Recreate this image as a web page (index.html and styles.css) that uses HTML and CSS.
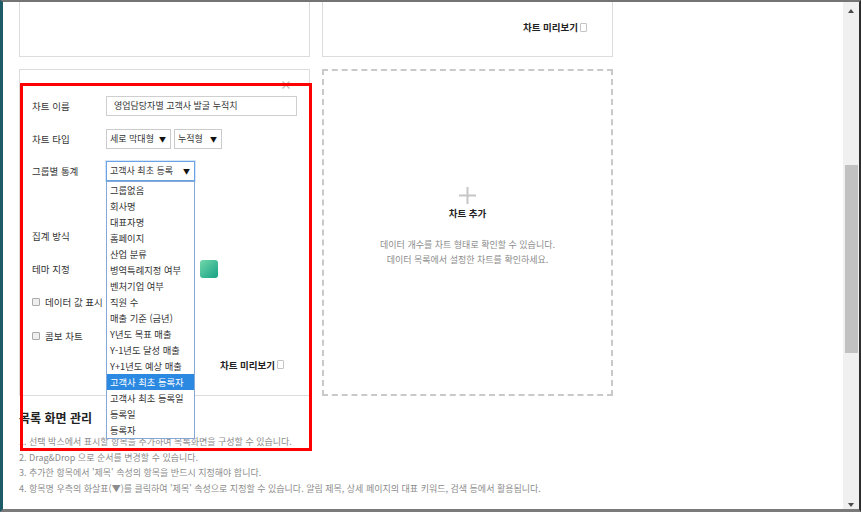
FILE: index.html
```html
<!DOCTYPE html>
<html lang="ko">
<head>
<meta charset="utf-8">
<title>차트 설정</title>
<link rel="stylesheet" href="styles.css">
</head>
<body>
<div class="window">
  <div class="viewport">
    <div class="page">
      <div class="row row-top">
        <div class="card card-top"></div>
        <div class="card card-top card-preview">
          <span class="preview">차트 미리보기<i class="tofu"></i></span>
        </div>
      </div>

      <div class="row row-main">
        <div class="card card-form">
          <span class="close"><svg width="8" height="8" viewBox="0 0 8 8"><path d="M0.5 0.5L7.5 7.5M7.5 0.5L0.5 7.5" stroke="#bdbdbd" stroke-width="1.4" fill="none"/></svg></span>
          <div class="form">
            <div class="frow"><span class="label">차트 이름</span><div class="input">영업담당자별 고객사 발굴 누적치</div></div>
            <div class="frow"><span class="label">차트 타입</span><div class="select w65">세로 막대형<span class="arr">▼</span></div><div class="select w48">누적형<span class="arr">▼</span></div></div>
            <div class="frow"><span class="label">그룹별 통계</span>
              <div class="select-wrap">
                <div class="select w89 focus">고객사 최초 등록<span class="arr">▼</span></div>
                <ul class="dropdown">
                  <li>그룹없음</li>
                  <li>회사명</li>
                  <li>대표자명</li>
                  <li>홈페이지</li>
                  <li>산업 분류</li>
                  <li>병역특례지정 여부</li>
                  <li>벤처기업 여부</li>
                  <li>직원 수</li>
                  <li>매출 기준 (금년)</li>
                  <li>Y년도 목표 매출</li>
                  <li>Y-1년도 달성 매출</li>
                  <li>Y+1년도 예상 매출</li>
                  <li class="sel">고객사 최초 등록자</li>
                  <li>고객사 최초 등록일</li>
                  <li>등록일</li>
                  <li>등록자</li>
                </ul>
              </div>
            </div>
            <div class="frow"></div>
            <div class="frow"><span class="label">집계 방식</span></div>
            <div class="frow"><span class="label">테마 지정</span><span class="spacer"></span><span class="swatch"></span></div>
            <div class="frow"><span class="check"></span><span>데이터 값 표시</span></div>
            <div class="frow combo"><span class="check"></span><span>콤보 차트</span></div>
            <div class="preview-row"><span class="preview">차트 미리보기<i class="tofu"></i></span></div>
          </div>
        </div>

        <div class="card card-add">
          <svg class="plus" width="17" height="17" viewBox="0 0 17 17"><path d="M8.5 0V17M0 8.5H17" stroke="#c6c6c6" stroke-width="2" fill="none"/></svg>
          <div class="add-title">차트 추가</div>
          <div class="add-desc">데이터 개수를 차트 형태로 확인할 수 있습니다.<br>데이터 목록에서 설정한 차트를 확인하세요.</div>
        </div>
      </div>

      <h2 class="section-title">목록 화면 관리</h2>
      <ul class="guide">
        <li>1. 선택 박스에서 표시할 항목을 추가하여 목록화면을 구성할 수 있습니다.</li>
        <li>2. Drag&amp;Drop 으로 순서를 변경할 수 있습니다.</li>
        <li>3. 추가한 항목에서 '제목' 속성의 항목을 반드시 지정해야 합니다.</li>
        <li>4. 항목명 우측의 화살표(▼)를 클릭하여 '제목' 속성으로 지정할 수 있습니다. 알림 제목, 상세 페이지의 대표 키워드, 검색 등에서 활용됩니다.</li>
      </ul>
    </div>
    <div class="annotation"></div>
  </div>
  <div class="scrollbar">
    <div class="sb-btn"><span class="tri-up"></span></div>
    <div class="sb-track"><div class="sb-thumb"></div></div>
    <div class="sb-btn sb-down"><span class="tri-down"></span></div>
  </div>
</div>
</body>
</html>
```

FILE: styles.css
```css
* { box-sizing: border-box; margin: 0; padding: 0; }
html, body { width: 861px; height: 512px; overflow: hidden; background: #fff; }
body { font-family: "Noto Sans CJK KR", "Noto Sans", sans-serif; color: #333; }

.window {
  width: 861px; height: 512px; display: flex;
  border-top: 2px solid #747474;
  border-left: 3px solid #1d5b69;
  border-right: 2px solid #2e2e2e;
  border-bottom: 3px solid #7a7a7a;
}
.viewport { flex: 1; position: relative; overflow: hidden; }
.page { padding-left: 16px; }

.row { display: flex; gap: 12px; }
.card { width: 291px; flex: none; border: 1px solid #dcdcdc; background: #fff; }
.row-top .card { height: 55px; border-top: 0; }
.card-preview { display: flex; justify-content: flex-end; align-items: flex-start; padding: 18px 25px 0 0; }

.preview { font-size: 9.5px; font-weight: 700; line-height: 14px; color: #222; display: flex; align-items: center; }
.tofu { width: 7px; height: 9px; border: 1px solid #c4c4c4; border-radius: 1px; margin-left: 2px; }

.row-main { margin-top: 12px; }
.row-main .card { height: 327px; }
.card-form { position: relative; }
.close { position: absolute; top: 11px; right: 19px; width: 8px; height: 8px; display: flex; }

.form { display: flex; flex-direction: column; gap: 12.6px; padding: 26px 25px 0 12px; }
.frow { height: 20px; display: flex; align-items: center; font-size: 9.5px; line-height: 14px; color: #333; }
.frow.combo { margin-top: 2px; }
.label { width: 74px; flex: none; }

.input { width: 191px; flex: none; height: 20px; border: 1px solid #cfcfcf; padding-left: 7px; font-size: 9px; line-height: 18px; color: #333; white-space: nowrap; }

.select {
  height: 20px; flex: none; border: 1px solid #cbcbcb; background: #fff;
  display: flex; justify-content: space-between; align-items: center;
  padding: 0 4px 0 3px; font-size: 9px; color: #333; white-space: nowrap;
}
.select + .select { margin-left: 3px; }
.w65 { width: 65px; }
.w48 { width: 48px; }
.w89 { width: 89px; }
.select.focus { border-color: #6aa3e3; box-shadow: 0 0 0 1px #d6e6f8; }
.arr { font-size: 7px; color: #111; }

.select-wrap { position: relative; flex: none; }
.dropdown {
  position: absolute; top: 20px; left: 0; width: 89px; z-index: 5;
  border: 1px solid #86a8d8; background: #fff; list-style: none;
}
.dropdown li { height: 16px; line-height: 16px; padding-left: 3px; font-size: 9.3px; color: #333; white-space: nowrap; }
.dropdown li.sel { background: #2c89e2; color: #fff; }

.spacer { width: 94px; flex: none; }
.swatch { width: 18px; height: 18px; flex: none; border-radius: 3px; background: linear-gradient(135deg, #72d8aa, #16a086); }

.check { width: 8px; height: 8px; border: 1px solid #ababab; background: #efefef; border-radius: 1px; margin-right: 5px; flex: none; }

.preview-row { display: flex; justify-content: flex-end; margin-top: -1px; }

.card-add {
  border: 2px dashed #c9c9c9;
  display: flex; flex-direction: column; align-items: center;
  padding-top: 116px;
}
.plus { display: block; }
.add-title { margin-top: 2px; font-size: 9.5px; font-weight: 700; line-height: 14px; color: #222; }
.add-desc { margin-top: 16.5px; font-size: 9px; line-height: 15px; color: #8c8c8c; text-align: center; }

.section-title { margin-top: 14px; font-size: 12px; line-height: 16px; font-weight: 700; color: #222; }
.guide { margin-top: 8.3px; list-style: none; font-size: 9px; line-height: 15.4px; color: #8c8c8c; white-space: nowrap; }

.annotation {
  position: absolute; left: 17px; top: 81px; width: 292px; height: 368px;
  border: 3px solid #ff0000; z-index: 10; pointer-events: none;
}

.scrollbar { width: 16px; flex: none; background: #f0f0f0; display: flex; flex-direction: column; }
.sb-btn { height: 17px; display: flex; justify-content: center; align-items: center; flex: none; }
.sb-down { align-items: flex-end; padding-bottom: 2px; }
.sb-track { flex: 1; }
.sb-thumb { margin: 146px 1px 0 2px; height: 188px; background: #c1c1c1; }
.tri-up { width: 0; height: 0; border-left: 3.5px solid transparent; border-right: 3.5px solid transparent; border-bottom: 4px solid #4a4a4a; }
.tri-down { width: 0; height: 0; border-left: 3.5px solid transparent; border-right: 3.5px solid transparent; border-top: 4px solid #4a4a4a; }
```
